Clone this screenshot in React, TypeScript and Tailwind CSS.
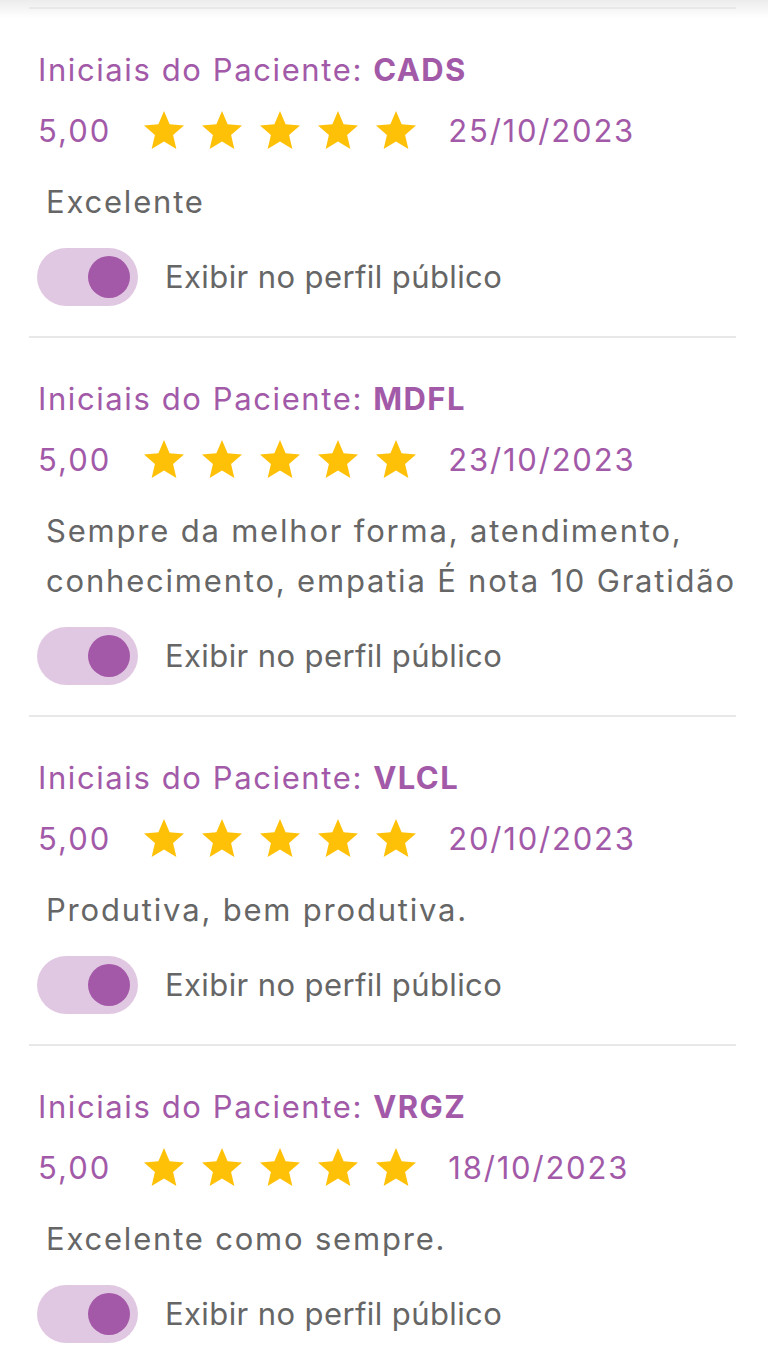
import React from "react";

type Review = {
    initials: string;
    rating: string;
    date: string;
    comment: string;
};

const reviews: Review[] = [
    { initials: "CADS", rating: "5,00", date: "25/10/2023", comment: "Excelente" },
    {
        initials: "MDFL",
        rating: "5,00",
        date: "23/10/2023",
        comment: "Sempre da melhor forma, atendimento, conhecimento, empatia É nota 10 Gratidão",
    },
    { initials: "VLCL", rating: "5,00", date: "20/10/2023", comment: "Produtiva, bem produtiva." },
    { initials: "VRGZ", rating: "5,00", date: "18/10/2023", comment: "Excelente como sempre." },
];

function Star() {
    return (
        <svg viewBox="0 0 24 24" className="w-[48px] h-[48px]" fill="#ffc107">
            <path d="M12 17.27L18.18 21l-1.64-7.03L22 9.24l-7.19-.61L12 2 9.19 8.63 2 9.24l5.46 4.73L5.82 21z" />
        </svg>
    );
}

function Toggle() {
    // always on in the screenshot
    return (
        <div className="w-[101px] h-[58px] rounded-full bg-[#e1c8e2] flex items-center justify-end pr-[8px] shrink-0">
            <div className="w-[42px] h-[42px] rounded-full bg-[#a358a8]" />
        </div>
    );
}

function ReviewCard({ review }: { review: Review }) {
    return (
        <div className="border-b-2 border-[#e8e8e8] pt-[36px] pb-[30px]">
            <div className="h-[50px] flex items-center pl-[9px] text-[31px] tracking-[1.6px] text-[#a25aa8]">
                Iniciais do Paciente:&nbsp;<span className="font-bold tracking-[1.4px]">{review.initials}</span>
            </div>
            <div className="h-[50px] mt-[11px] flex items-center pl-[9px] text-[31px] text-[#a25aa8]">
                <span className="tracking-[2px]">{review.rating}</span>
                <div className="flex gap-[10px] ml-[29px] mr-[28px]">
                    <Star />
                    <Star />
                    <Star />
                    <Star />
                    <Star />
                </div>
                <span className="tracking-[1.8px]">{review.date}</span>
            </div>
            <p className="mt-[21px] pl-[17px] text-[31px] leading-[50px] tracking-[1.8px] text-[#666666] w-[730px]">
                {review.comment}
            </p>
            <div className="mt-[21px] h-[58px] flex items-center pl-[8px]">
                <Toggle />
                <span className="ml-[27px] text-[31px] tracking-[0.4px] text-[#666666]">Exibir no perfil público</span>
            </div>
        </div>
    );
}

export default function App(): React.ReactNode {
    return (
        <div className="relative min-h-screen bg-white overflow-hidden" style={{ fontFamily: "Inter, 'Noto Sans', sans-serif" }}>
            {/* shadow from the header above */}
            <div className="absolute top-0 left-0 right-0 h-[18px] bg-gradient-to-b from-[#ececec] to-transparent pointer-events-none" />
            <div className="ml-[29px] w-[707px]">
                <div className="h-[9px] border-b-2 border-[#e3e3e3]" />
                {reviews.map((r) => (
                    <ReviewCard key={r.initials} review={r} />
                ))}
            </div>
        </div>
    );
}
